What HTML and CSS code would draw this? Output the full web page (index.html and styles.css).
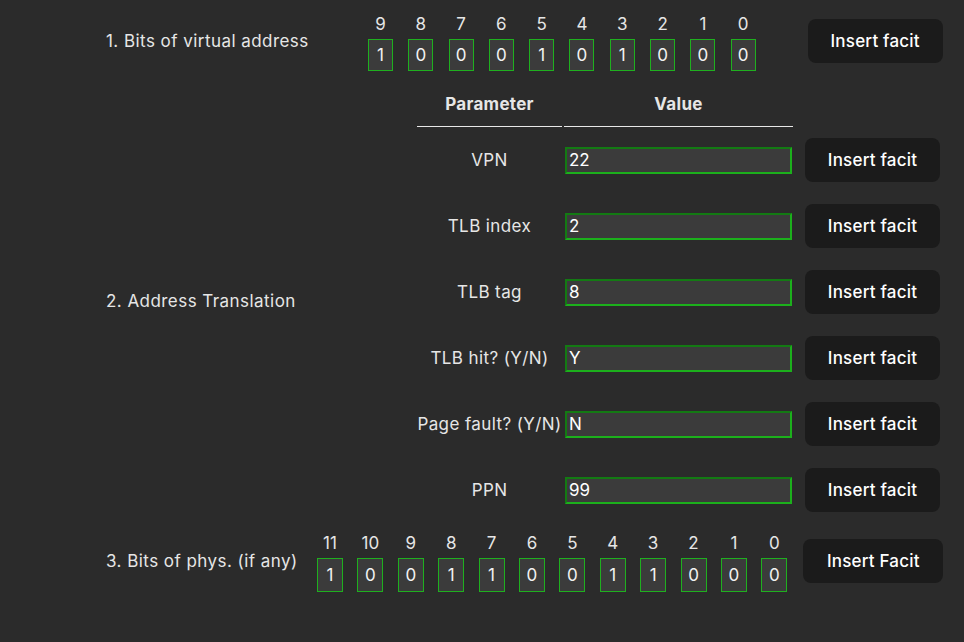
FILE: index.html
```html
<!DOCTYPE html>
<html>
<head>
<meta charset="utf-8">
<link rel="stylesheet" href="styles.css">
</head>
<body>
<div class="page">
  <section class="sec sec1">
    <div class="label l1">1. Bits of virtual address</div>
    <div class="bits bits10">
      <span class="num">9</span><span class="num">8</span><span class="num">7</span><span class="num">6</span><span class="num">5</span><span class="num">4</span><span class="num">3</span><span class="num">2</span><span class="num">1</span><span class="num">0</span>
      <span class="box">1</span><span class="box">0</span><span class="box">0</span><span class="box">0</span><span class="box">1</span><span class="box">0</span><span class="box">1</span><span class="box">0</span><span class="box">0</span><span class="box">0</span>
    </div>
    <button class="btn b1">Insert facit</button>
  </section>

  <section class="sec sec2">
    <div class="label l2">2. Address Translation</div>
    <div class="table">
      <div class="th">Parameter</div><div class="th">Value</div><div class="thx"></div>
      <div class="pc">VPN</div><div class="vc"><div class="inp">22</div></div><div class="bc"><button class="btn">Insert facit</button></div>
      <div class="pc">TLB index</div><div class="vc"><div class="inp">2</div></div><div class="bc"><button class="btn">Insert facit</button></div>
      <div class="pc">TLB tag</div><div class="vc"><div class="inp">8</div></div><div class="bc"><button class="btn">Insert facit</button></div>
      <div class="pc">TLB hit? (Y/N)</div><div class="vc"><div class="inp">Y</div></div><div class="bc"><button class="btn">Insert facit</button></div>
      <div class="pc">Page fault? (Y/N)</div><div class="vc"><div class="inp">N</div></div><div class="bc"><button class="btn">Insert facit</button></div>
      <div class="pc">PPN</div><div class="vc"><div class="inp">99</div></div><div class="bc"><button class="btn">Insert facit</button></div>
    </div>
  </section>

  <section class="sec sec3">
    <div class="label l3">3. Bits of phys. (if any)</div>
    <div class="bits bits12">
      <span class="num">11</span><span class="num">10</span><span class="num">9</span><span class="num">8</span><span class="num">7</span><span class="num">6</span><span class="num">5</span><span class="num">4</span><span class="num">3</span><span class="num">2</span><span class="num">1</span><span class="num">0</span>
      <span class="box">1</span><span class="box">0</span><span class="box">0</span><span class="box">1</span><span class="box">1</span><span class="box">0</span><span class="box">0</span><span class="box">1</span><span class="box">1</span><span class="box">0</span><span class="box">0</span><span class="box">0</span>
    </div>
    <button class="btn b3">Insert Facit</button>
  </section>
</div>
</body>
</html>
```

FILE: styles.css
```css
html, body {
  margin: 0;
  padding: 0;
  background: #2b2b2b;
}
body {
  width: 964px;
  height: 642px;
  overflow: hidden;
  font-family: Inter, "Noto Sans", sans-serif;
  font-size: 17px;
  color: #e6e6e6;
}
.page {
  padding-top: 16px;
  padding-left: 106px;
}
.sec {
  display: flex;
  align-items: flex-start;
}
.label {
  line-height: 20px;
  white-space: nowrap;
  letter-spacing: 0.45px;
}
.l1 { width: 262px; margin-top: 15px; }
.l2 { width: 311px; margin-top: 197px; }
.l3 { width: 211px; margin-top: 16px; }

.bits {
  display: grid;
  row-gap: 7px;
  justify-items: center;
}
.bits10 {
  grid-template-columns: repeat(10, 25px);
  column-gap: 15.3px;
}
.bits12 {
  grid-template-columns: repeat(12, 26px);
  column-gap: 14.4px;
}
.num {
  line-height: 16px;
  height: 16px;
  color: #e6e6e6;
}
.box {
  box-sizing: border-box;
  width: 100%;
  border: 1px solid #1fb01f;
  background: #3b3b3b;
  color: #f2f2f2;
  display: flex;
  align-items: center;
  justify-content: center;
}
.bits10 .box { height: 32px; }
.bits12 .box { height: 34px; }

.btn {
  box-sizing: border-box;
  height: 44px;
  width: 135px;
  border: none;
  border-radius: 8px;
  background: #1b1b1b;
  color: #ffffff;
  font-family: Inter, "Noto Sans", sans-serif;
  font-size: 17px;
  font-weight: 500;
  letter-spacing: 0.2px;
  padding: 0;
}
.b1 { margin-left: 52px; margin-top: 3px; }
.b3 { margin-left: 16px; margin-top: 4px; width: 140px; }

.sec2 { margin-top: 23px; }
.table {
  display: grid;
  grid-template-columns: 145px 229px 147px;
  column-gap: 2px;
}
.th {
  line-height: 20px;
  padding-bottom: 12px;
  border-bottom: 1px solid #e8e8e8;
  text-align: center;
  font-weight: 700;
  letter-spacing: 0.3px;
}
.pc, .vc, .bc {
  height: 66px;
  display: flex;
  align-items: center;
}
.pc { justify-content: center; white-space: nowrap; letter-spacing: 0.4px; }
.vc { padding-left: 1px; }
.bc { padding-left: 10px; }
.inp {
  box-sizing: border-box;
  width: 227px;
  height: 27px;
  border: 2px solid #1cb01c;
  border-top-color: #137a13;
  border-left-color: #137a13;
  background: #3b3b3b;
  color: #ffffff;
  padding-left: 2px;
  line-height: 23px;
}
.sec3 { margin-top: 12px; }
```
